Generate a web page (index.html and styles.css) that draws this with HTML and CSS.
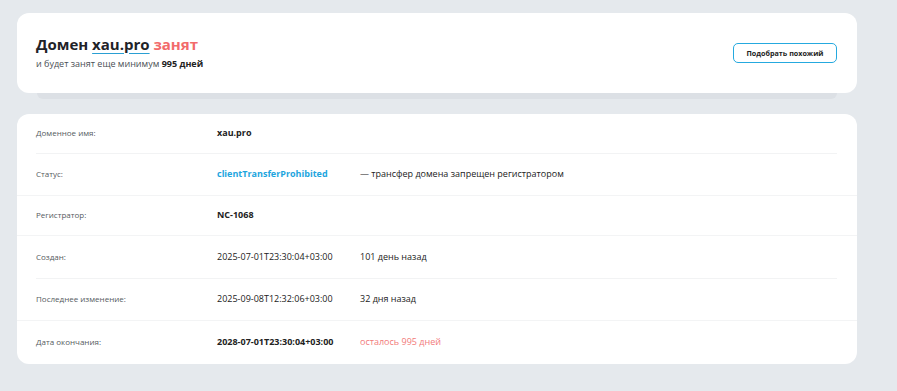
FILE: index.html
```html
<!DOCTYPE html>
<html lang="ru">
<head>
  <meta charset="UTF-8" />
  <meta name="viewport" content="width=device-width, initial-scale=1.0"/>
  <title>xau.pro — Whois</title>
  <link rel="stylesheet" href="styles.css">
</head>
<body>
  <div class="page">
    <div class="summary">
      <div class="summary-text">
        <h1>Домен <span class="domain">xau.pro</span> <span class="busy">занят</span></h1>
        <p>и будет занят еще минимум <b>995 дней</b></p>
      </div>
      <button class="btn">Подобрать похожий</button>
    </div>
    <div class="summary-tab"></div>

    <div class="details">
      <div class="row inset">
        <div class="label">Доменное имя:</div>
        <div class="value bold">xau.pro</div>
      </div>
      <div class="row">
        <div class="label">Статус:</div>
        <div class="value bold status">clientTransferProhibited</div>
        <div class="note">— трансфер домена запрещен регистратором</div>
      </div>
      <div class="row short">
        <div class="label">Регистратор:</div>
        <div class="value bold">NC-1068</div>
      </div>
      <div class="row inset">
        <div class="label">Создан:</div>
        <div class="value">2025-07-01T23:30:04+03:00</div>
        <div class="note">101 день назад</div>
      </div>
      <div class="row">
        <div class="label">Последнее изменение:</div>
        <div class="value">2025-09-08T12:32:06+03:00</div>
        <div class="note">32 дня назад</div>
      </div>
      <div class="row last">
        <div class="label">Дата окончания:</div>
        <div class="value bold">2028-07-01T23:30:04+03:00</div>
        <div class="note left">осталось 995 дней</div>
      </div>
    </div>
  </div>
</body>
</html>
```

FILE: styles.css
```css
body {
  margin: 0;
  font-family: "Open Sans", Arial, sans-serif;
  background: #e5e9ed;
  color: #222;
}
.page {
  width: 840px;
  padding: 13px 0 0 17px;
}
.summary {
  background: #fff;
  border-radius: 12px;
  height: 80px;
  box-sizing: border-box;
  padding: 0 20px 0 19px;
  display: flex;
  align-items: center;
  justify-content: space-between;
}
.summary-text {
  margin-top: -3px;
}
.summary h1 {
  margin: 0;
  font-size: 15px;
  font-weight: 700;
  line-height: 20px;
  color: #1f2328;
}
.domain {
  text-decoration: underline;
  text-decoration-color: #2a9fd3;
  text-underline-offset: 3px;
}
.busy {
  color: #f26b6b;
}
.summary p {
  margin: 4px 0 0;
  font-size: 9px;
  line-height: 12px;
  color: #4a4f55;
}
.summary p b {
  color: #222;
}
.btn {
  width: 104px;
  height: 20px;
  margin-top: -1px;
  background: #fff;
  border: 1.5px solid #25a9df;
  border-radius: 5px;
  font-family: inherit;
  font-size: 7.2px;
  font-weight: 700;
  color: #222;
  padding: 0;
}
.summary-tab {
  height: 6px;
  margin: 0 20px;
  background: #dce0e5;
  border-radius: 0 0 6px 6px;
}
.details {
  margin-top: 15px;
  background: #fff;
  border-radius: 12px;
}
.row {
  display: flex;
  align-items: center;
  box-sizing: border-box;
  height: 42px;
  padding: 0 19px 3px;
  border-bottom: 1px solid #f3f4f5;
  font-size: 9px;
}
.row:first-child,
.row.short {
  height: 40px;
}
.row.inset {
  border-bottom: 0;
  background-image: linear-gradient(#f2f3f4, #f2f3f4);
  background-size: calc(100% - 39px) 1px;
  background-position: 19px 100%;
  background-repeat: no-repeat;
}
.row.inset:nth-child(4) {
  height: 43px;
}
.row.last {
  border-bottom: 0;
  height: 43px;
}
.label {
  width: 181px;
  font-size: 8px;
  color: #555a60;
}
.value {
  width: 143px;
  color: #222;
}
.bold {
  font-weight: 700;
}
.status {
  color: #1da5de;
}
.note {
  color: #222;
}
.note.left {
  color: #f27a7a;
}
```
